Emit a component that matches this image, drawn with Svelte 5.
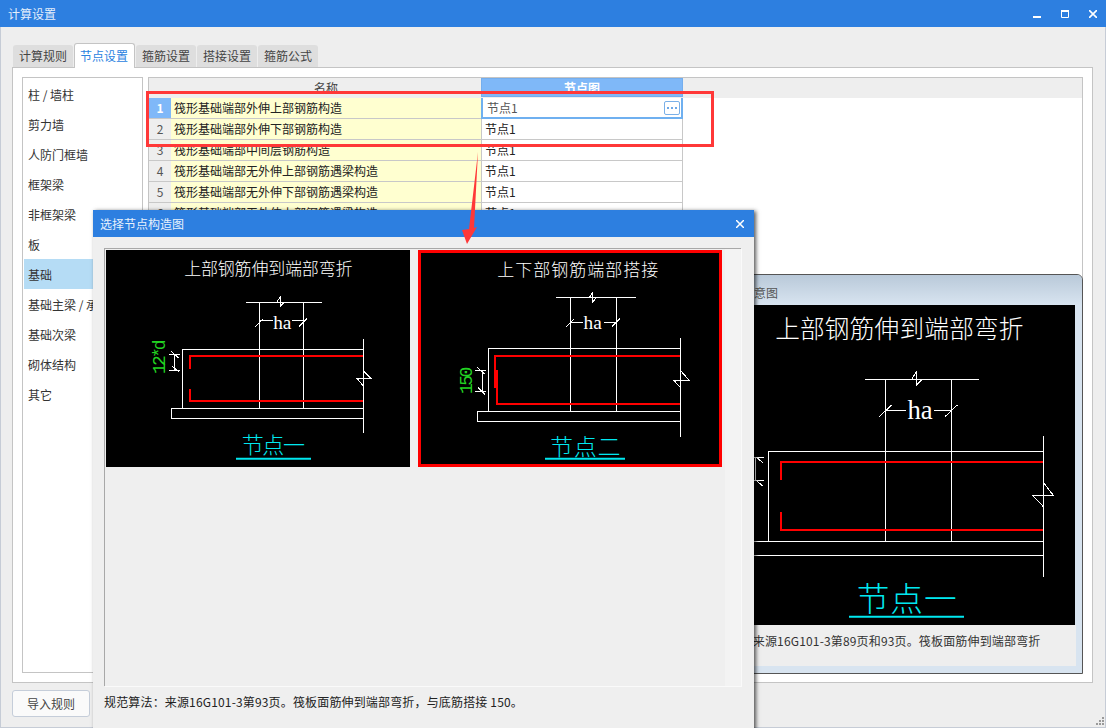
<script>
  const tabs = ["计算规则", "节点设置", "箍筋设置", "搭接设置", "箍筋公式"];
  const menu = ["柱 / 墙柱", "剪力墙", "人防门框墙", "框架梁", "非框架梁", "板", "基础", "基础主梁 / 承台梁", "基础次梁", "砌体结构", "其它"];
  const rows = [
    "筏形基础端部外伸上部钢筋构造",
    "筏形基础端部外伸下部钢筋构造",
    "筏形基础端部中间层钢筋构造",
    "筏形基础端部无外伸上部钢筋遇梁构造",
    "筏形基础端部无外伸下部钢筋遇梁构造",
    "筏形基础端部无外伸上部钢筋遇梁构造"
  ];

  // all drawing coordinates are 3x screen pixels
  const nodeOne = {
    vb: "18 30 912 651",
    title: "上部钢筋伸到端部弯折", tx: 505, ty: 105, ts: 51, tl: 505,
    ha: [547, 266, 58],
    dim: "12*d", dx: 194, dy: 350, dl: 104, ds: 54,
    name: "节点一", nx: 520, ny: 640, ns: 66, nl: 190,
    under: "M408 656H633",
    lines: "M438 187H665M530 187L540 172V200L552 187M478 187V505M610 187V505M480 240H520M575 240H610M466 260L490 236M596 260L620 236M247 505V328H790M214 505H790M214 536H790M214 505V536M790 297V578M770 414H812L792 394M770 414L790 438M222 343V390M208 343H240M208 390H240M212 332L236 354M216 378L238 396",
    rebar: "M270 386V348H790M270 447V483H790"
  };
  const nodeTwo = {
    vb: "27 39 894 633",
    title: "上下部钢筋端部搭接", tx: 497, ty: 108, ts: 51, tl: 483,
    ha: [542, 266, 58],
    dim: "150", dx: 180, dy: 421, dl: 82, ds: 54,
    name: "节点二", nx: 520, ny: 645, ns: 68, nl: 210,
    under: "M399 656H639",
    lines: "M432 172H672M532 172L542 158V186L554 172M475 172V514M613 172V514M475 246H512M575 246H613M463 260L487 236M600 260L624 236M229 514V324H805M196 514H805M196 545H805M196 514V545M805 294V590M785 420H830L808 394M785 420L805 443M210 390V455M190 390H222M190 455H222M194 380L218 402M198 442L220 464",
    rebar: "M805 348H250V445M256 390V492H805"
  };
  const nodeBig = {
    vb: "-360 120 1365 960",
    title: "上部钢筋伸到端部弯折", tx: 478, ty: 218, ts: 74, tl: 745,
    ha: [540, 462, 80],
    dim: "12*d", dx: -25, dy: 605, dl: 150, ds: 70,
    name: "节点一", nx: 500, ny: 1038, ns: 98, nl: 300,
    under: "M327 1055H672",
    lines: "M375 343H717M515 343L528 322V362L546 343M437 343V829M634 343V829M437 437H497M583 437H634M417 455L455 420M615 455L652 420M85 829V560H910M35 829H910M35 871H910M35 829V871M910 513V935M877 691H940L912 655M877 691L910 725M45 577V647M20 577H72M20 647H72M50 577L68 593M50 647L68 663",
    rebar: "M122 645V591H910M122 741V795H910"
  };
</script>

{#snippet cad(d)}
  <svg class="cad" viewBox={d.vb} aria-hidden="true">
    <text class="cad-title" x={d.tx} y={d.ty} font-size={d.ts} textLength={d.tl} text-anchor="middle">{d.title}</text>
    <path class="cad-line" d={d.lines} />
    <path class="cad-rebar" d={d.rebar} />
    <text class="cad-ha" x={d.ha[0]} y={d.ha[1]} font-size={d.ha[2]} text-anchor="middle">ha</text>
    <text class="cad-dim" x={d.dx} y={d.dy} font-size={d.ds} textLength={d.dl} text-anchor="middle" transform="rotate(-90 {d.dx} {d.dy})">{d.dim}</text>
    <text class="cad-name" x={d.nx} y={d.ny} font-size={d.ns} textLength={d.nl} text-anchor="middle">{d.name}</text>
    <path class="cad-under" d={d.under} />
  </svg>
{/snippet}

<div class="desktop">
  <div class="window">
    <header class="titlebar">
      <span>计算设置</span>
      <div class="controls">
        <svg width="8" height="8" viewBox="0 0 8 8"><path d="M0 6h8v2H0z" fill="#fff" /></svg>
        <svg width="8" height="8" viewBox="0 0 8 8"><path d="M.5 1.5h7v6h-7z" fill="none" stroke="#fff" /><path d="M0 0h8v2H0z" fill="#fff" /></svg>
        <svg width="8" height="8" viewBox="0 0 8 8"><path d="M0 0l8 8M8 0l-8 8" stroke="#fff" stroke-width="1.6" /></svg>
      </div>
    </header>

    <div class="body">
      <nav class="tabs">
        {#each tabs as tab, i}
          <div class="tab" class:active={i === 1}>{tab}</div>
        {/each}
      </nav>

      <section class="panel">
        <ul class="menu">
          {#each menu as item, i}
            <li class:current={i === 6}>{item}</li>
          {/each}
        </ul>

        <div class="grid">
          <div class="grid-head">
            <div class="col-num"></div>
            <div class="col-name">名称</div>
            <div class="col-node">节点图</div>
          </div>
          {#each rows as row, i}
            <div class="grid-row">
              <div class="col-num" class:on={i === 0}>{i + 1}</div>
              <div class="col-name">{row}</div>
              <div class="col-node" class:editing={i === 0}>
                节点1
                {#if i === 0}
                  <button class="more" aria-label="选择">
                    <svg width="10" height="4" viewBox="0 0 10 4"><path d="M0 1h2v2H0zM4 1h2v2H4zM8 1h2v2H8z" fill="#6fa8e6" /></svg>
                  </button>
                {/if}
              </div>
            </div>
          {/each}
        </div>
      </section>

      <footer class="actions">
        <button class="plain">导入规则</button>
      </footer>
    </div>

    <svg class="grip" width="8" height="8" viewBox="0 0 8 8" aria-hidden="true">
      <path d="M6 0h2v2H6zM3 3h2v2H3zM6 3h2v2H6zM0 6h2v2H0zM3 6h2v2H3zM6 6h2v2H6z" fill="#9a9a9a" />
    </svg>
  </div>

  <div class="preview">
    <div class="preview-title">示意图</div>
    <div class="preview-image">{@render cad(nodeBig)}</div>
    <p class="preview-note">规范算法：来源16G101-3第89页和93页。筏板面筋伸到端部弯折</p>
  </div>

  <div class="dialog">
    <header class="dialog-title">
      <span>选择节点构造图</span>
      <svg width="8" height="8" viewBox="0 0 8 8"><path d="M0 0l8 8M8 0l-8 8" stroke="#fff" stroke-width="1.5" /></svg>
    </header>
    <div class="picker">
      <div class="cards">
        <div class="card">{@render cad(nodeOne)}</div>
        <div class="card selected">{@render cad(nodeTwo)}</div>
      </div>
      <div class="track"></div>
    </div>
    <p class="rule">规范算法：来源16G101-3第93页。筏板面筋伸到端部弯折，与底筋搭接 150。</p>
  </div>

  <div class="mark"></div>
  <svg class="arrow" width="24" height="100" viewBox="0 0 24 100" aria-hidden="true">
    <path d="M20 0L16 76L19 75L9 92L4 78L11 77z" fill="#ff3838" />
  </svg>
</div>

<style>
  :global(body) {
    margin: 0;
    font-family: "Noto Sans CJK SC", "Liberation Sans", sans-serif;
    font-size: 12px;
    color: #222;
  }

  .desktop {
    position: relative;
    width: 1106px;
    height: 728px;
    overflow: hidden;
  }

  .window {
    position: relative;
    display: flex;
    flex-direction: column;
    height: 728px;
    box-sizing: border-box;
    background: #eeeeee;
    border: 1px solid #c6ccd6;
    border-top: 0;
  }

  .titlebar {
    display: flex;
    align-items: center;
    justify-content: space-between;
    height: 27px;
    margin: 0 -1px;
    padding: 0 9px 0 8px;
    background: #2d7fe0;
    color: #e4eefb;
    line-height: 27px;
  }

  .controls {
    display: flex;
    gap: 20px;
  }

  .body {
    display: flex;
    flex-direction: column;
    flex: 1;
    padding: 15px 12px 0 11px;
  }

  .tabs {
    display: flex;
    align-items: flex-end;
    gap: 1px;
    height: 25px;
    padding-left: 1px;
    position: relative;
    z-index: 1;
  }

  .tab {
    height: 22px;
    padding: 0 6px;
    line-height: 22px;
    background: #dedede;
    border-radius: 3px 3px 0 0;
    color: #444;
  }

  .tab.active {
    height: 25px;
    padding: 0 6px 0 5px;
    margin-bottom: -1px;
    line-height: 24px;
    background: #fff;
    border: 1px solid #c4c4c4;
    border-bottom: 0;
    box-sizing: border-box;
    color: #2b83df;
  }

  .panel {
    display: flex;
    gap: 5px;
    height: 616px;
    box-sizing: border-box;
    padding: 9px;
    background: #fff;
    border: 1px solid #c4c4c4;
  }

  .menu {
    width: 121px;
    box-sizing: border-box;
    margin: 0;
    padding: 1px 0 0 1px;
    list-style: none;
    border: 1px solid #c4c4c4;
  }

  .menu li {
    height: 30px;
    padding-left: 4px;
    line-height: 32px;
    color: #333;
    white-space: nowrap;
  }

  .menu li.current {
    background: #b5dcf5;
  }

  .grid {
    flex: 1;
    border: 1px solid #c4c4c4;
    background: #fff;
  }

  .grid-head,
  .grid-row {
    display: flex;
  }

  .grid-head {
    height: 20px;
    background: #eeeeee;
    line-height: 20px;
    text-align: center;
    color: #444;
  }

  .grid-row {
    height: 21px;
    line-height: 20px;
  }

  .col-num {
    width: 22px;
    text-align: center;
    box-sizing: border-box;
  }

  .col-name {
    width: 310px;
    box-sizing: border-box;
  }

  .col-node {
    position: relative;
    width: 202px;
    box-sizing: border-box;
  }

  .grid-head .col-node {
    height: 19px;
    background: #7fb8f8;
    border: 1px solid #74aeee;
    line-height: 18px;
    color: #fff;
    font-weight: 700;
  }

  .grid-row .col-num {
    background: #eeeeee;
    border-bottom: 1px solid #c8c8c8;
    color: #555;
  }

  .grid-row .col-num.on {
    background: #7fb8f8;
    color: #fff;
    font-weight: 700;
  }

  .grid-row .col-name {
    padding-left: 3px;
    background: #ffffd0;
    border-bottom: 1px solid #c8c8c8;
  }

  .grid-row .col-node {
    padding-left: 3px;
    border-left: 1px solid #c8c8c8;
    border-right: 1px solid #c8c8c8;
    border-bottom: 1px solid #c8c8c8;
  }

  .grid-row .col-node.editing {
    padding-left: 4px;
    border: 1px solid #6fb0f0;
    border-width: 0 2px 2px;
    color: #555;
  }

  .more {
    position: absolute;
    top: 3px;
    right: 1px;
    display: flex;
    align-items: center;
    justify-content: center;
    width: 16px;
    height: 14px;
    padding: 0;
    background: #fff;
    border: 1px solid #7ab0e8;
    border-radius: 2px;
  }

  .actions {
    padding-top: 7px;
  }

  .plain {
    width: 78px;
    height: 27px;
    padding: 0;
    background: #fafafa;
    border: 1px solid #c5cdd9;
    border-radius: 3px;
    font: inherit;
    color: #444;
  }

  .grip {
    position: absolute;
    right: 1px;
    bottom: 2px;
  }

  .preview {
    position: absolute;
    left: 600px;
    top: 274px;
    display: flex;
    flex-direction: column;
    width: 483px;
    height: 400px;
    box-sizing: border-box;
    background: #d8e4f0;
    border: 1px solid #555;
    border-radius: 6px 6px 0 0;
  }

  .preview-title {
    height: 30px;
    padding-left: 141px;
    line-height: 36px;
    background: linear-gradient(#b9c9d9, #d8e4f0);
    border-radius: 5px 5px 0 0;
    color: #555;
  }

  .preview-image {
    height: 320px;
    margin-left: 19px;
    margin-right: 7px;
    background: #000;
    line-height: 0;
  }

  .preview-note {
    flex: 1;
    margin: 0 6px 7px 0;
    padding: 6px 0 0 91px;
    background: #eeeeee;
    color: #333;
    line-height: 20px;
    letter-spacing: 0.16px;
    white-space: nowrap;
  }

  .dialog {
    position: absolute;
    left: 93px;
    top: 210px;
    width: 661px;
    height: 530px;
    background: #efefef;
    box-shadow: 2px 1px 4px rgba(0, 0, 0, 0.65);
  }

  .dialog-title {
    display: flex;
    align-items: center;
    justify-content: space-between;
    height: 27px;
    padding: 0 10px 0 7px;
    background: #2d7fe0;
    color: #e8f1fc;
  }

  .picker {
    display: flex;
    height: 438px;
    margin: 11px 13px 0 11px;
    box-sizing: border-box;
    background: #efefef;
    border: 1px solid #a8a8a8;
    border-width: 1px 0 0 1px;
    box-shadow: 1px 1px 0 #fafafa;
  }

  .cards {
    flex: 1;
    display: flex;
    align-items: flex-start;
    gap: 8px;
    padding: 1px 0 0 1px;
  }

  .card {
    width: 304px;
    height: 217px;
    box-sizing: border-box;
    background: #000;
    line-height: 0;
  }

  .card.selected {
    border: 3px solid #f00;
  }

  .track {
    width: 16px;
    background: #f3f3f3;
  }

  .rule {
    margin: 7px 0 0 11px;
    line-height: 18px;
    letter-spacing: 0.16px;
    color: #222;
  }

  .cad {
    display: block;
    width: 100%;
    height: 100%;
  }

  .cad-title {
    fill: #fff;
    font-weight: 300;
  }

  .cad-line {
    fill: none;
    stroke: #fff;
    stroke-width: 3;
    shape-rendering: crispEdges;
  }

  .cad-rebar {
    fill: none;
    stroke: #f00;
    stroke-width: 6;
    shape-rendering: crispEdges;
  }

  .cad-ha {
    fill: #fff;
    font-family: "Liberation Serif", serif;
  }

  .cad-dim {
    fill: #22d322;
    font-family: "Liberation Mono", monospace;
  }

  .cad-name {
    fill: #00e8f0;
    font-weight: 300;
  }

  .cad-under {
    fill: none;
    stroke: #00e8f0;
    stroke-width: 6;
  }

  .mark {
    position: absolute;
    left: 146px;
    top: 91px;
    width: 568px;
    height: 56px;
    box-sizing: border-box;
    border: 3px solid #ff3838;
  }

  .arrow {
    position: absolute;
    left: 458px;
    top: 152px;
  }
</style>
